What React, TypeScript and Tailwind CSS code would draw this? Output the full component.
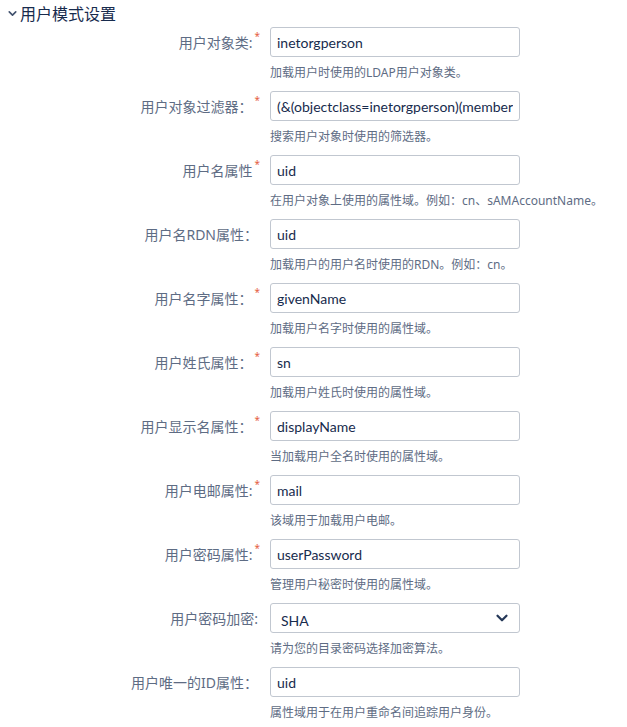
import { ChevronDown } from 'lucide-react';

type Field = {
  label: string;
  required?: boolean;
  value: string;
  help: string;
  select?: boolean;
};

const FIELDS: Field[] = [
  { label: '用户对象类:', required: true, value: 'inetorgperson', help: '加载用户时使用的LDAP用户对象类。' },
  { label: '用户对象过滤器：', required: true, value: '(&(objectclass=inetorgperson)(memberOf=cn=jira,ou=groups,dc=example,dc=com))', help: '搜索用户对象时使用的筛选器。' },
  { label: '用户名属性', required: true, value: 'uid', help: '在用户对象上使用的属性域。例如：cn、sAMAccountName。' },
  { label: '用户名RDN属性：', value: 'uid', help: '加载用户的用户名时使用的RDN。例如：cn。' },
  { label: '用户名字属性：', required: true, value: 'givenName', help: '加载用户名字时使用的属性域。' },
  { label: '用户姓氏属性：', required: true, value: 'sn', help: '加载用户姓氏时使用的属性域。' },
  { label: '用户显示名属性：', required: true, value: 'displayName', help: '当加载用户全名时使用的属性域。' },
  { label: '用户电邮属性:', required: true, value: 'mail', help: '该域用于加载用户电邮。' },
  { label: '用户密码属性:', required: true, value: 'userPassword', help: '管理用户秘密时使用的属性域。' },
  { label: '用户密码加密:', value: 'SHA', help: '请为您的目录密码选择加密算法。', select: true },
  { label: '用户唯一的ID属性：', value: 'uid', help: '属性域用于在用户重命名间追踪用户身份。' },
];

export default function App() {
  return (
    <div className="w-[627px] h-[727px] overflow-hidden bg-white font-['Noto_Sans','Noto_Sans_CJK_SC',sans-serif]">
      <div className="flex items-center h-[27px] pl-[6px]">
        <ChevronDown className="h-[13px] w-[13px] text-[#42526e]" strokeWidth={3} />
        <h3 className="ml-[1px] text-[16px] leading-none text-[#172b4d]">用户模式设置</h3>
      </div>

      <div className="flex flex-col">
        {FIELDS.map((f) => (
          <div key={f.label} className="flex h-[64px]">
            <div className="w-[260px] h-[30px] flex items-center justify-end text-[14px] text-[#5e6c84]">
              <span>{f.label}</span>
              {f.required ? (
                <span className="self-start mt-[4px] ml-[2px] text-[10px] leading-none text-[#e5603f]">*</span>
              ) : (
                <span className="w-[2px]" />
              )}
            </div>
            <div className="ml-[10px] flex flex-col">
              {f.select ? (
                <div className="flex items-center justify-between w-[250px] h-[30px] rounded-[3px] border border-[#c1c7d0] bg-white pl-[10px] pr-[8px]">
                  <span className="mt-[4px] text-[14px] text-[#172b4d] font-['Lato',sans-serif]">{f.value}</span>
                  <ChevronDown className="h-[18px] w-[18px] text-[#253858]" strokeWidth={3} />
                </div>
              ) : (
                <input
                  readOnly
                  value={f.value}
                  className="w-[250px] h-[30px] rounded-[3px] border border-[#c1c7d0] bg-white px-[6px] text-[14px] text-[#172b4d] font-['Lato',sans-serif] outline-none"
                />
              )}
              <p className="mt-[8px] text-[12px] leading-[16px] text-[#5e6c84] whitespace-nowrap">{f.help}</p>
            </div>
          </div>
        ))}
      </div>
    </div>
  );
}
